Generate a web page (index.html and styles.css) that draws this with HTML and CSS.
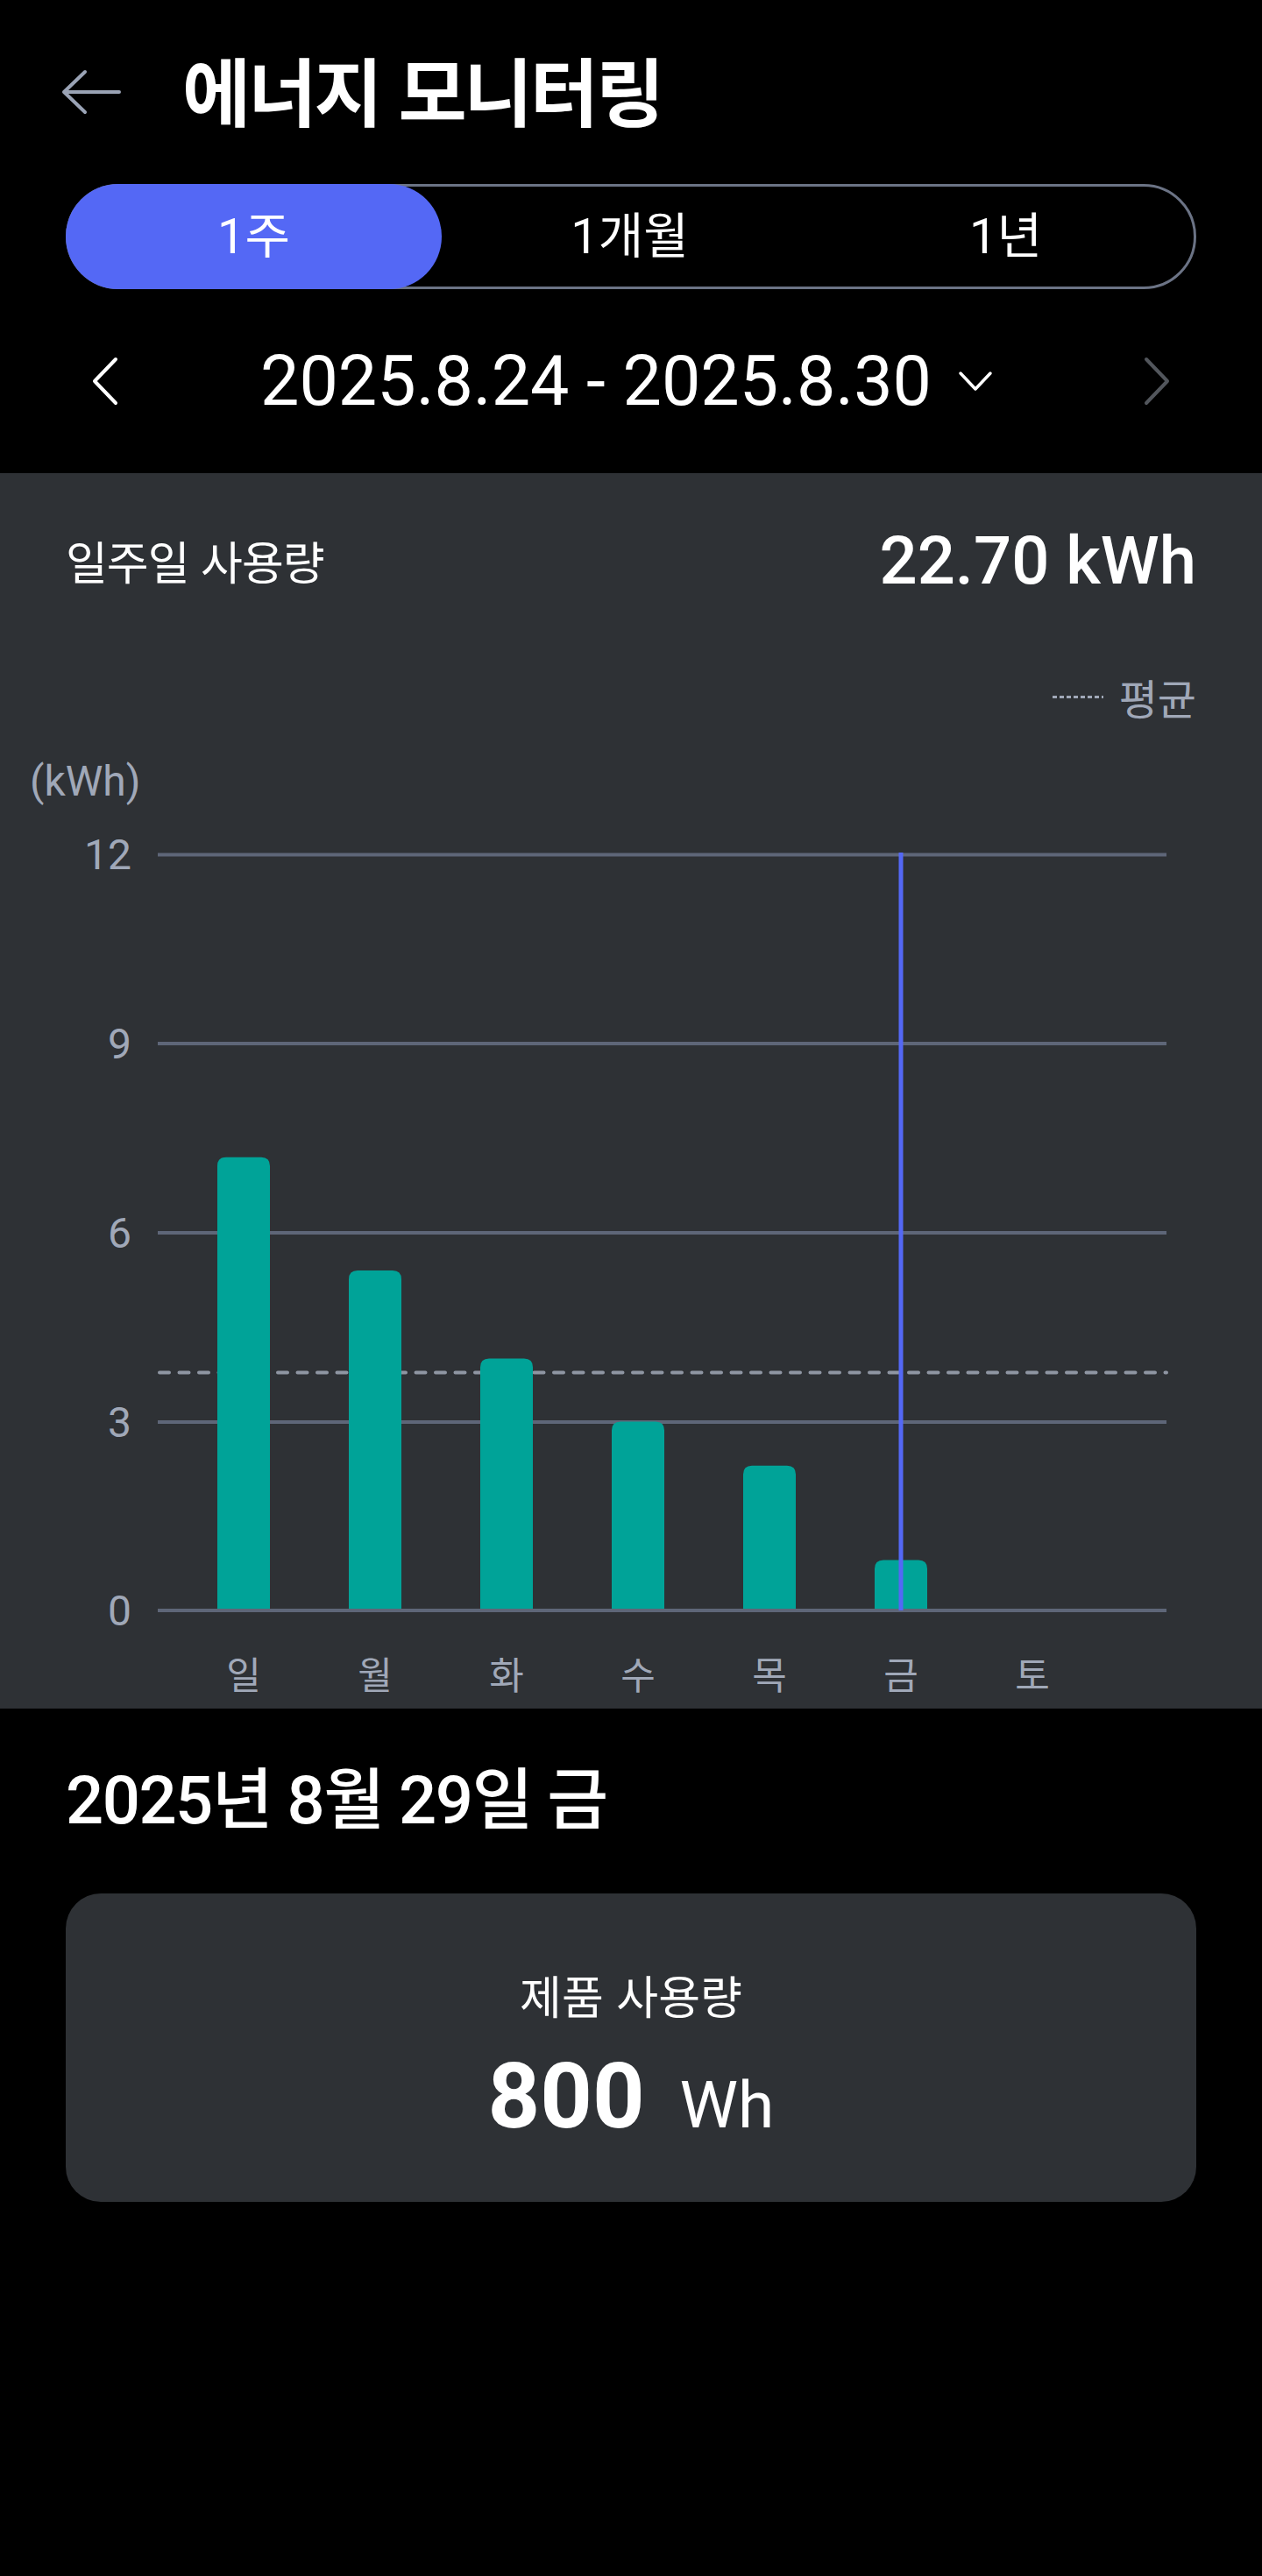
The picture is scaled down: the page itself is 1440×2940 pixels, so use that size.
FILE: index.html
```html
<!DOCTYPE html>
<html lang="ko">
<head>
  <meta charset="UTF-8" />
  <meta name="viewport" content="width=device-width, initial-scale=1.0"/>
  <title>에너지 모니터링</title>
  <link rel="stylesheet" href="styles.css">
</head>
<body>
  <header class="top">
    <svg class="back" width="72" height="72" viewBox="0 0 72 72">
      <path d="M68 41H5M29 18L5 41L29 64" />
    </svg>
    <h1>에너지 모니터링</h1>
  </header>

  <div class="tabs">
    <div class="tab active">1주</div>
    <div class="tab">1개월</div>
    <div class="tab">1년</div>
  </div>

  <div class="period">
    <svg class="arrow" width="40" height="60" viewBox="0 0 40 60">
      <path d="M32 5L8 30L32 55" />
    </svg>
    <div class="range">
      <span>2025.8.24 - 2025.8.30</span>
      <svg class="caret" width="40" height="24" viewBox="0 0 40 24">
        <path d="M3 3L20 21L37 3" />
      </svg>
    </div>
    <svg class="arrow off" width="40" height="60" viewBox="0 0 40 60">
      <path d="M8 5L32 30L8 55" />
    </svg>
  </div>

  <section class="panel">
    <div class="summary">
      <div class="label">일주일 사용량</div>
      <div class="value">22.70 kWh</div>
    </div>
    <div class="legend">
      <span class="dots"></span>
      <span>평균</span>
    </div>

    <svg class="chart" width="1440" height="1100" viewBox="0 0 1440 1100">
      <text class="unit" x="34" y="58">(kWh)</text>

      <g class="grid">
        <line x1="180" x2="1331" y1="125.5" y2="125.5" />
        <line x1="180" x2="1331" y1="341" y2="341" />
        <line x1="180" x2="1331" y1="557" y2="557" />
        <line x1="180" x2="1331" y1="773" y2="773" />
      </g>
      <g class="ticks">
        <text x="150" y="142">12</text>
        <text x="150" y="358">9</text>
        <text x="150" y="574">6</text>
        <text x="150" y="790">3</text>
        <text x="150" y="1005">0</text>
      </g>

      <line class="avg" x1="182" x2="1331" y1="716.5" y2="716.5" />

      <g class="bars">
        <path d="M248 988V480.7Q248 470.7 258 470.7H298Q308 470.7 308 480.7V988Z" />
        <path d="M398 988V610Q398 600 408 600H448Q458 600 458 610V988Z" />
        <path d="M548 988V710.6Q548 700.6 558 700.6H598Q608 700.6 608 710.6V988Z" />
        <path d="M698 988V782.4Q698 772.4 708 772.4H748Q758 772.4 758 782.4V988Z" />
        <path d="M848 988V832.7Q848 822.7 858 822.7H898Q908 822.7 908 832.7V988Z" />
        <path d="M998 988V940.5Q998 930.5 1008 930.5H1048Q1058 930.5 1058 940.5V988Z" />
      </g>

      <line class="grid base" x1="180" x2="1331" y1="988" y2="988" />
      <line class="cursor" x1="1028" x2="1028" y1="123" y2="988" />

      <g class="days">
        <text x="278" y="1078">일</text>
        <text x="428" y="1078">월</text>
        <text x="578" y="1078">화</text>
        <text x="728" y="1078">수</text>
        <text x="878" y="1078">목</text>
        <text x="1028" y="1078">금</text>
        <text x="1178" y="1078">토</text>
      </g>
    </svg>
  </section>

  <h2 class="day-title">2025년 8월 29일 금</h2>

  <div class="card">
    <div class="card-label">제품 사용량</div>
    <div class="card-value"><b>800</b><span>Wh</span></div>
  </div>
</body>
</html>
```

FILE: styles.css
```css
body {
  margin: 0;
  width: 1440px;
  min-height: 2940px;
  background: #000;
  color: #fff;
  font-family: "Roboto", "Noto Sans CJK KR", sans-serif;
}
.top {
  display: flex;
  align-items: center;
  height: 200px;
  padding-left: 68px;
}
.back {
  fill: none;
  stroke: #9aa3b5;
  stroke-width: 4;
  stroke-linecap: round;
  stroke-linejoin: round;
}
h1 {
  margin: 0 0 0 68px;
  font-family: "Noto Sans CJK KR", sans-serif;
  font-size: 85px;
  font-weight: 700;
  letter-spacing: -3px;
  line-height: 1;
}
.tabs {
  display: flex;
  height: 114px;
  margin: 10px 75px 0;
  border: 3px solid #6b7385;
  border-radius: 60px;
}
.tab {
  flex: 1;
  display: flex;
  align-items: center;
  justify-content: center;
  font-size: 56px;
  line-height: 1;
}
.tab.active {
  margin: -3px 0 -3px -3px;
  background: #5468f5;
  border-radius: 60px;
}
.period {
  display: flex;
  align-items: center;
  justify-content: space-between;
  height: 210px;
  padding: 0 100px;
}
.arrow {
  fill: none;
  stroke: #fff;
  stroke-width: 4;
  stroke-linecap: round;
  stroke-linejoin: round;
}
.arrow.off {
  stroke: #52565c;
}
.range {
  display: flex;
  align-items: center;
  font-size: 79px;
  line-height: 1;
  margin-left: -10px;
}
.caret {
  margin-left: 30px;
  fill: none;
  stroke: #fff;
  stroke-width: 3.5;
  stroke-linecap: round;
  stroke-linejoin: round;
}
.panel {
  height: 1410px;
  background: #2e3135;
}
.summary {
  display: flex;
  align-items: center;
  justify-content: space-between;
  height: 200px;
  padding: 0 75px;
}
.summary .label {
  font-family: "Noto Sans CJK KR", sans-serif;
  font-size: 52px;
  letter-spacing: -1px;
  line-height: 1;
}
.summary .value {
  font-size: 76px;
  font-weight: 500;
  line-height: 1;
}
.legend {
  display: flex;
  align-items: center;
  justify-content: flex-end;
  height: 110px;
  padding: 0 75px;
  color: #a0a8b8;
  font-family: "Noto Sans CJK KR", sans-serif;
  font-size: 48px;
  line-height: 1;
}
.dots {
  width: 58px;
  height: 3px;
  margin-right: 18px;
  background: repeating-linear-gradient(90deg, #a0a8b8 0 5px, transparent 5px 8px);
}
.chart {
  display: block;
}
.chart text {
  fill: #a0a8b8;
}
.unit {
  font-size: 48px;
}
.ticks text {
  font-size: 48px;
  text-anchor: end;
}
.grid line,
.grid.base {
  stroke: #5e6678;
  stroke-width: 4;
}
.avg {
  stroke: #8f96a3;
  stroke-width: 4;
  stroke-linecap: round;
  stroke-dasharray: 11 11.5;
}
.bars path {
  fill: #00a398;
}
.cursor {
  stroke: #5468f5;
  stroke-width: 5;
}
.days text {
  font-family: "Noto Sans CJK KR", sans-serif;
  font-size: 43px;
  text-anchor: middle;
}
.day-title {
  margin: 55px 75px 0;
  font-size: 76px;
  font-weight: 500;
  letter-spacing: -1.5px;
  line-height: 100px;
}
.card {
  margin: 56px 75px 0;
  padding: 90px 0 68px;
  border-radius: 40px;
  background: #2e3135;
  text-align: center;
}
.card-label {
  font-family: "Noto Sans CJK KR", sans-serif;
  font-size: 52px;
  line-height: 1;
}
.card-value {
  margin-top: 38px;
  line-height: 1;
}
.card-value b {
  font-size: 104px;
  font-weight: 700;
}
.card-value span {
  margin-left: 40px;
  font-size: 75px;
}
```
